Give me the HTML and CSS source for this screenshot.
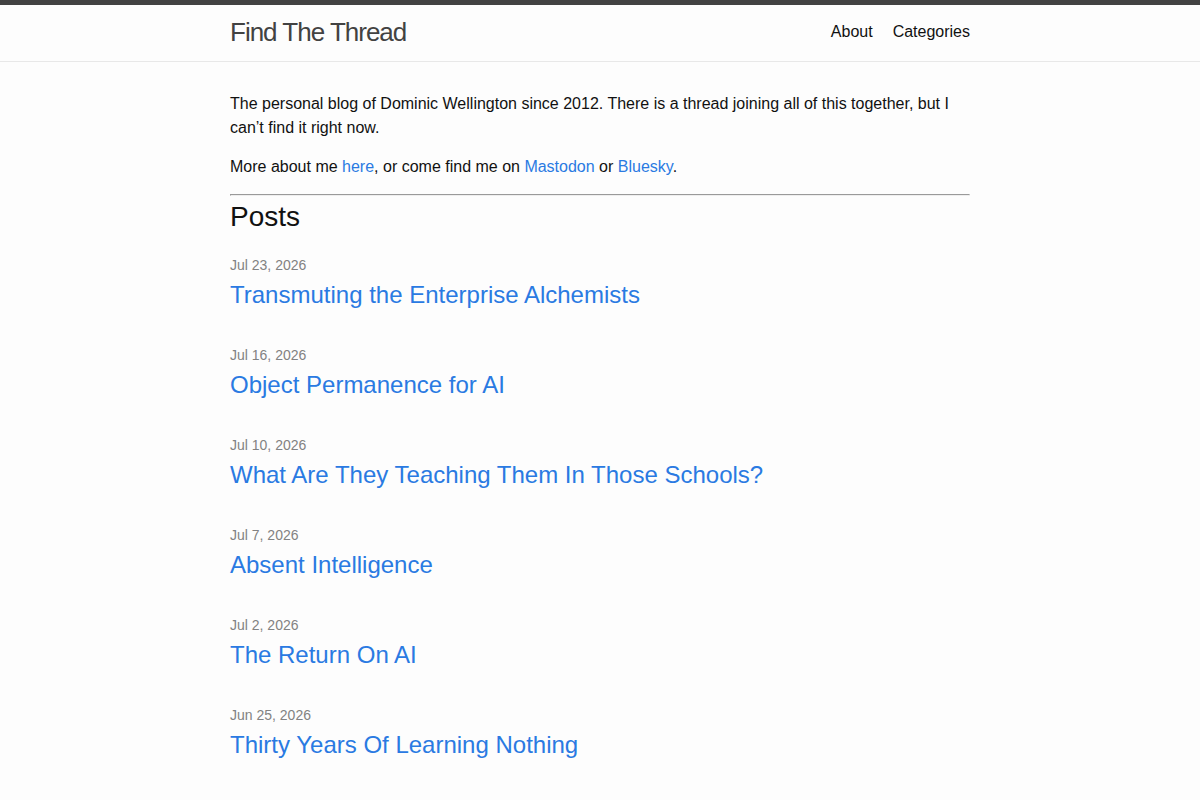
FILE: index.html
```html
<!DOCTYPE html>
<html lang="en">
<head>
    <meta charset="UTF-8">
    <meta name="viewport" content="width=device-width, initial-scale=1.0">
    <title>Find The Thread</title>
    <link rel="stylesheet" href="styles.css">
</head>
<body>
    <header class="site-header">
        <div class="wrapper header-row">
            <a class="site-title" href="#">Find The Thread</a>
            <nav class="site-nav">
                <a class="page-link" href="#">About</a>
                <a class="page-link" href="#">Categories</a>
            </nav>
        </div>
    </header>

    <main class="page-content">
        <div class="wrapper">
            <p>The personal blog of Dominic Wellington since 2012. There is a thread joining all of this together, but I can’t find it right now.</p>
            <p>More about me <a href="#">here</a>, or come find me on <a href="#">Mastodon</a> or <a href="#">Bluesky</a>.</p>
            <hr>
            <h2 class="post-list-heading">Posts</h2>
            <ul class="post-list">
                <li>
                    <span class="post-meta">Jul 23, 2026</span>
                    <h3><a class="post-link" href="#">Transmuting the Enterprise Alchemists</a></h3>
                </li>
                <li>
                    <span class="post-meta">Jul 16, 2026</span>
                    <h3><a class="post-link" href="#">Object Permanence for AI</a></h3>
                </li>
                <li>
                    <span class="post-meta">Jul 10, 2026</span>
                    <h3><a class="post-link" href="#">What Are They Teaching Them In Those Schools?</a></h3>
                </li>
                <li>
                    <span class="post-meta">Jul 7, 2026</span>
                    <h3><a class="post-link" href="#">Absent Intelligence</a></h3>
                </li>
                <li>
                    <span class="post-meta">Jul 2, 2026</span>
                    <h3><a class="post-link" href="#">The Return On AI</a></h3>
                </li>
                <li>
                    <span class="post-meta">Jun 25, 2026</span>
                    <h3><a class="post-link" href="#">Thirty Years Of Learning Nothing</a></h3>
                </li>
            </ul>
        </div>
    </main>
</body>
</html>
```

FILE: styles.css
```css
body {
    margin: 0;
    padding: 0;
    font: 400 16px/1.5 "Liberation Sans", Arial, sans-serif;
    color: #111;
    background-color: #fdfdfd;
}
h2, h3, p, ul {
    margin: 0;
    padding: 0;
}
p {
    margin-bottom: 15px;
}
a {
    color: #2a7ae2;
    text-decoration: none;
}
hr {
    margin: 0;
}
.wrapper {
    max-width: 740px;
    margin: 0 auto;
    padding: 0 30px;
}
.site-header {
    border-top: 5px solid #424242;
    border-bottom: 1px solid #e8e8e8;
    min-height: 55.95px;
}
.header-row {
    display: flex;
    justify-content: space-between;
    align-items: center;
}
.site-title {
    font-size: 26px;
    font-weight: 300;
    line-height: 54px;
    letter-spacing: -1px;
    color: #424242;
}
.site-nav {
    display: flex;
    gap: 20px;
    line-height: 54px;
}
.page-link {
    color: #111;
}
.page-content {
    padding: 30px 0;
}
.post-list-heading {
    font-size: 28px;
    font-weight: 400;
    line-height: 42px;
    margin-bottom: 15px;
}
.post-list {
    list-style: none;
}
.post-list li {
    margin-bottom: 30px;
}
.post-meta {
    font-size: 14px;
    color: #828282;
}
.post-list h3 {
    font-size: 24px;
    font-weight: 400;
    line-height: 36px;
}
```
